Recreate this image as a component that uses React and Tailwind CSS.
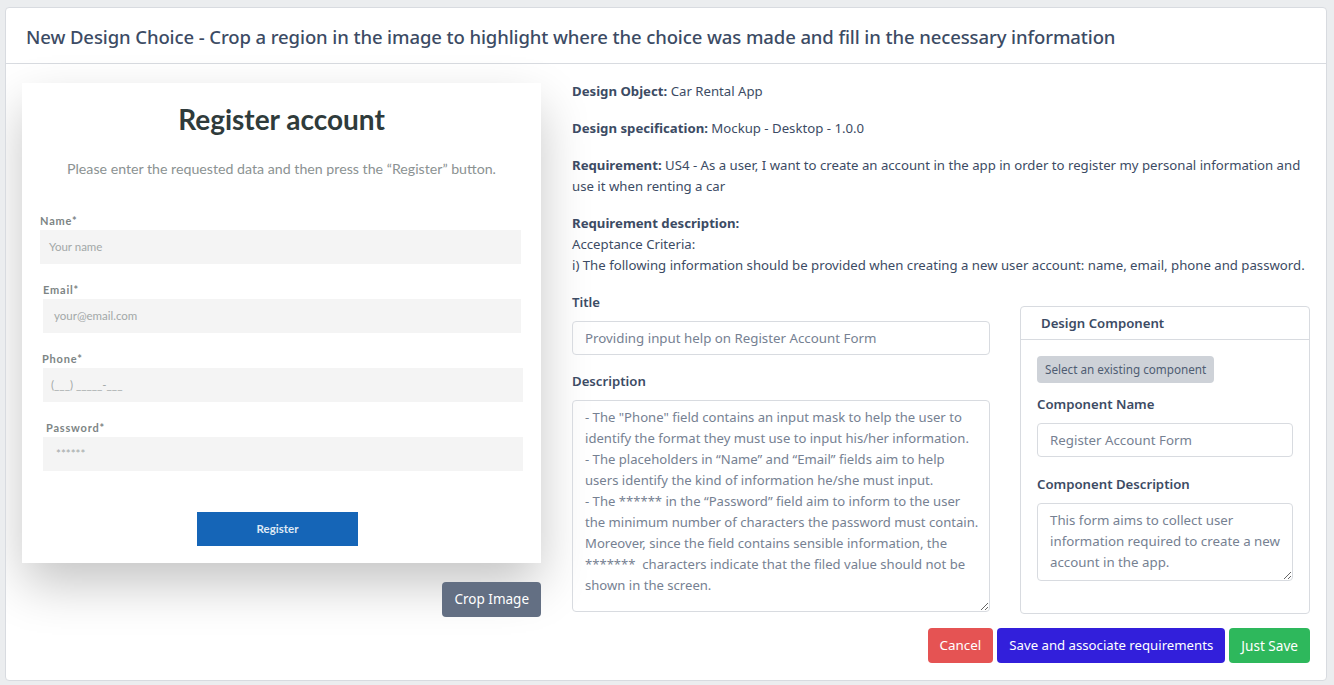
import React from "react";

const descText = `- The "Phone" field contains an input mask to help the user to
identify the format they must use to input his/her information.
- The placeholders in “Name” and “Email” fields aim to help
users identify the kind of information he/she must input.
- The ****** in the “Password” field aim to inform to the user
the minimum number of characters the password must contain.
Moreover, since the field contains sensible information, the
*******  characters indicate that the filed value should not be
shown in the screen.`;

const compDesc = `This form aims to collect user
information required to create a new
account in the app.`;

// one label + grey input of the mockup screenshot
function MockField({ label, placeholder, labelClass, inputClass, textClass }) {
  return (
    <div className="mb-[19px]">
      <div className={`text-[11px] leading-[13px] font-bold tracking-[0.8px] text-[#7d8585] ${labelClass}`}>
        {label}
      </div>
      <div className={`mt-[3px] flex h-[34px] items-center bg-[#f4f4f4] ${inputClass}`}>
        <span className={`text-[11.5px] text-[#a3a8a8] ${textClass}`}>{placeholder}</span>
      </div>
    </div>
  );
}

function RegisterMockup() {
  return (
    <div className="h-[480px] bg-white shadow-[0_22px_48px_-2px_rgba(0,0,0,0.24)] font-['Lato',sans-serif] pt-[19px]">
      <h2 className="text-center text-[28px] leading-[34px] font-bold text-[#2f3b3b]">Register account</h2>
      <p className="mt-[24px] text-center text-[14.2px] leading-[18px] text-[#8b9292]">
        Please enter the requested data and then press the “Register” button.
      </p>
      <div className="mt-[36px]">
        <MockField label="Name*" placeholder="Your name" labelClass="ml-[18px]" inputClass="ml-[18px] w-[481px]" textClass="ml-[9px]" />
        <MockField label="Email*" placeholder="your@email.com" labelClass="ml-[21px]" inputClass="ml-[21px] w-[478px]" textClass="ml-[11px]" />
        <MockField label="Phone*" placeholder="(___) _____-___" labelClass="ml-[20px]" inputClass="ml-[21px] w-[480px]" textClass="ml-[8px]" />
        <MockField label="Password*" placeholder="******" labelClass="ml-[24px]" inputClass="ml-[21px] w-[480px]" textClass="ml-[13px] text-[10px]" />
      </div>
      <div className="mt-[41px] ml-[175px] flex h-[34px] w-[161px] items-center justify-center bg-[#1565b7] text-[11.5px] font-bold text-[#dfe9f5]">
        Register
      </div>
    </div>
  );
}

export default function App() {
  return (
    <div className="min-h-screen bg-[#ebedef] pl-[5px] pr-[7px] pt-[7px] pb-[4px] font-['Noto_Sans',sans-serif] text-[#3c4b64]">
      <div className="flex h-[674px] flex-col overflow-hidden rounded-[4px] border border-[#d8dbe0] bg-white">
        <div className="flex h-[56px] shrink-0 items-center border-b border-[#d8dbe0] px-[20px] pt-[3px]">
          <h5 className="text-[18.5px] font-medium tracking-[-0.1px]">
            New Design Choice - Crop a region in the image to highlight where the choice was made and fill in the necessary information
          </h5>
        </div>

        <div className="flex gap-[31px] px-4 pt-[17px]">
          {/* left: the screenshot to crop */}
          <div className="flex w-[519px] shrink-0 flex-col pt-[2px]">
            <RegisterMockup />
            <div className="mt-[19px] flex justify-end">
              <button className="h-[35px] rounded-[4px] bg-[#636f83] px-3 text-[13.5px] text-white">Crop Image</button>
            </div>
          </div>

          {/* right: info + form */}
          <div className="flex-1 text-[13.2px] leading-[21px]">
            <p className="mb-4"><b className="font-bold">Design Object:</b> Car Rental App</p>
            <p className="mb-4"><b className="font-bold">Design specification:</b> Mockup - Desktop - 1.0.0</p>
            <p className="mb-4">
              <b className="font-bold">Requirement:</b> US4 - As a user, I want to create an account in the app in order to register my personal information and
              <br />
              use it when renting a car
            </p>
            <div className="mb-4">
              <b className="font-bold">Requirement description:</b>
              <br />
              Acceptance Criteria:
              <br />
              i) The following information should be provided when creating a new user account: name, email, phone and password.
            </div>

            <div className="flex gap-[30px]">
              <div className="w-[418px] shrink-0">
                <label className="mb-2 block font-semibold">Title</label>
                <input
                  readOnly
                  value="Providing input help on Register Account Form"
                  className="block h-[34px] w-full rounded-[4px] border border-[#d8dbe0] px-3 text-[13.3px] text-[#768192] outline-none"
                />
                <label className="mb-2 mt-4 block font-semibold">Description</label>
                <textarea
                  readOnly
                  wrap="off"
                  value={descText}
                  className="block h-[212px] w-full overflow-hidden rounded-[4px] border border-[#d8dbe0] px-3 py-[6px] text-[13.1px] leading-[21px] text-[#768192] outline-none"
                />
              </div>

              <div className="mt-[14px] h-[308px] flex-1 rounded-[4px] border border-[#d8dbe0]">
                <div className="flex h-[33px] items-center border-b border-[#d8dbe0] px-5 font-semibold">Design Component</div>
                <div className="px-4 pt-4">
                  <button className="h-[27px] rounded-[4px] bg-[#ced2d8] px-2 text-[11.7px] text-[#4f5d73]">
                    Select an existing component
                  </button>
                  <label className="mb-2 mt-[11px] block font-semibold">Component Name</label>
                  <input
                    readOnly
                    value="Register Account Form"
                    className="block h-[34px] w-full rounded-[4px] border border-[#d8dbe0] px-3 text-[13.3px] text-[#768192] outline-none"
                  />
                  <label className="mb-2 mt-[17px] block font-semibold">Component Description</label>
                  <textarea
                    readOnly
                    wrap="off"
                    value={compDesc}
                    className="block h-[78px] w-full overflow-hidden rounded-[4px] border border-[#d8dbe0] px-3 py-[6px] text-[13.3px] leading-[21px] text-[#768192] outline-none"
                  />
                </div>
              </div>
            </div>

            <div className="mt-[14px] flex justify-end gap-1">
              <button className="h-[35px] rounded-[4px] bg-[#e55353] px-3 text-[13.4px] text-white">Cancel</button>
              <button className="h-[35px] rounded-[4px] bg-[#321fdb] px-3 text-[13.2px] text-white">Save and associate requirements</button>
              <button className="h-[35px] rounded-[4px] bg-[#2eb85c] px-3 text-[13.6px] text-white">Just Save</button>
            </div>
          </div>
        </div>
      </div>
    </div>
  );
}
